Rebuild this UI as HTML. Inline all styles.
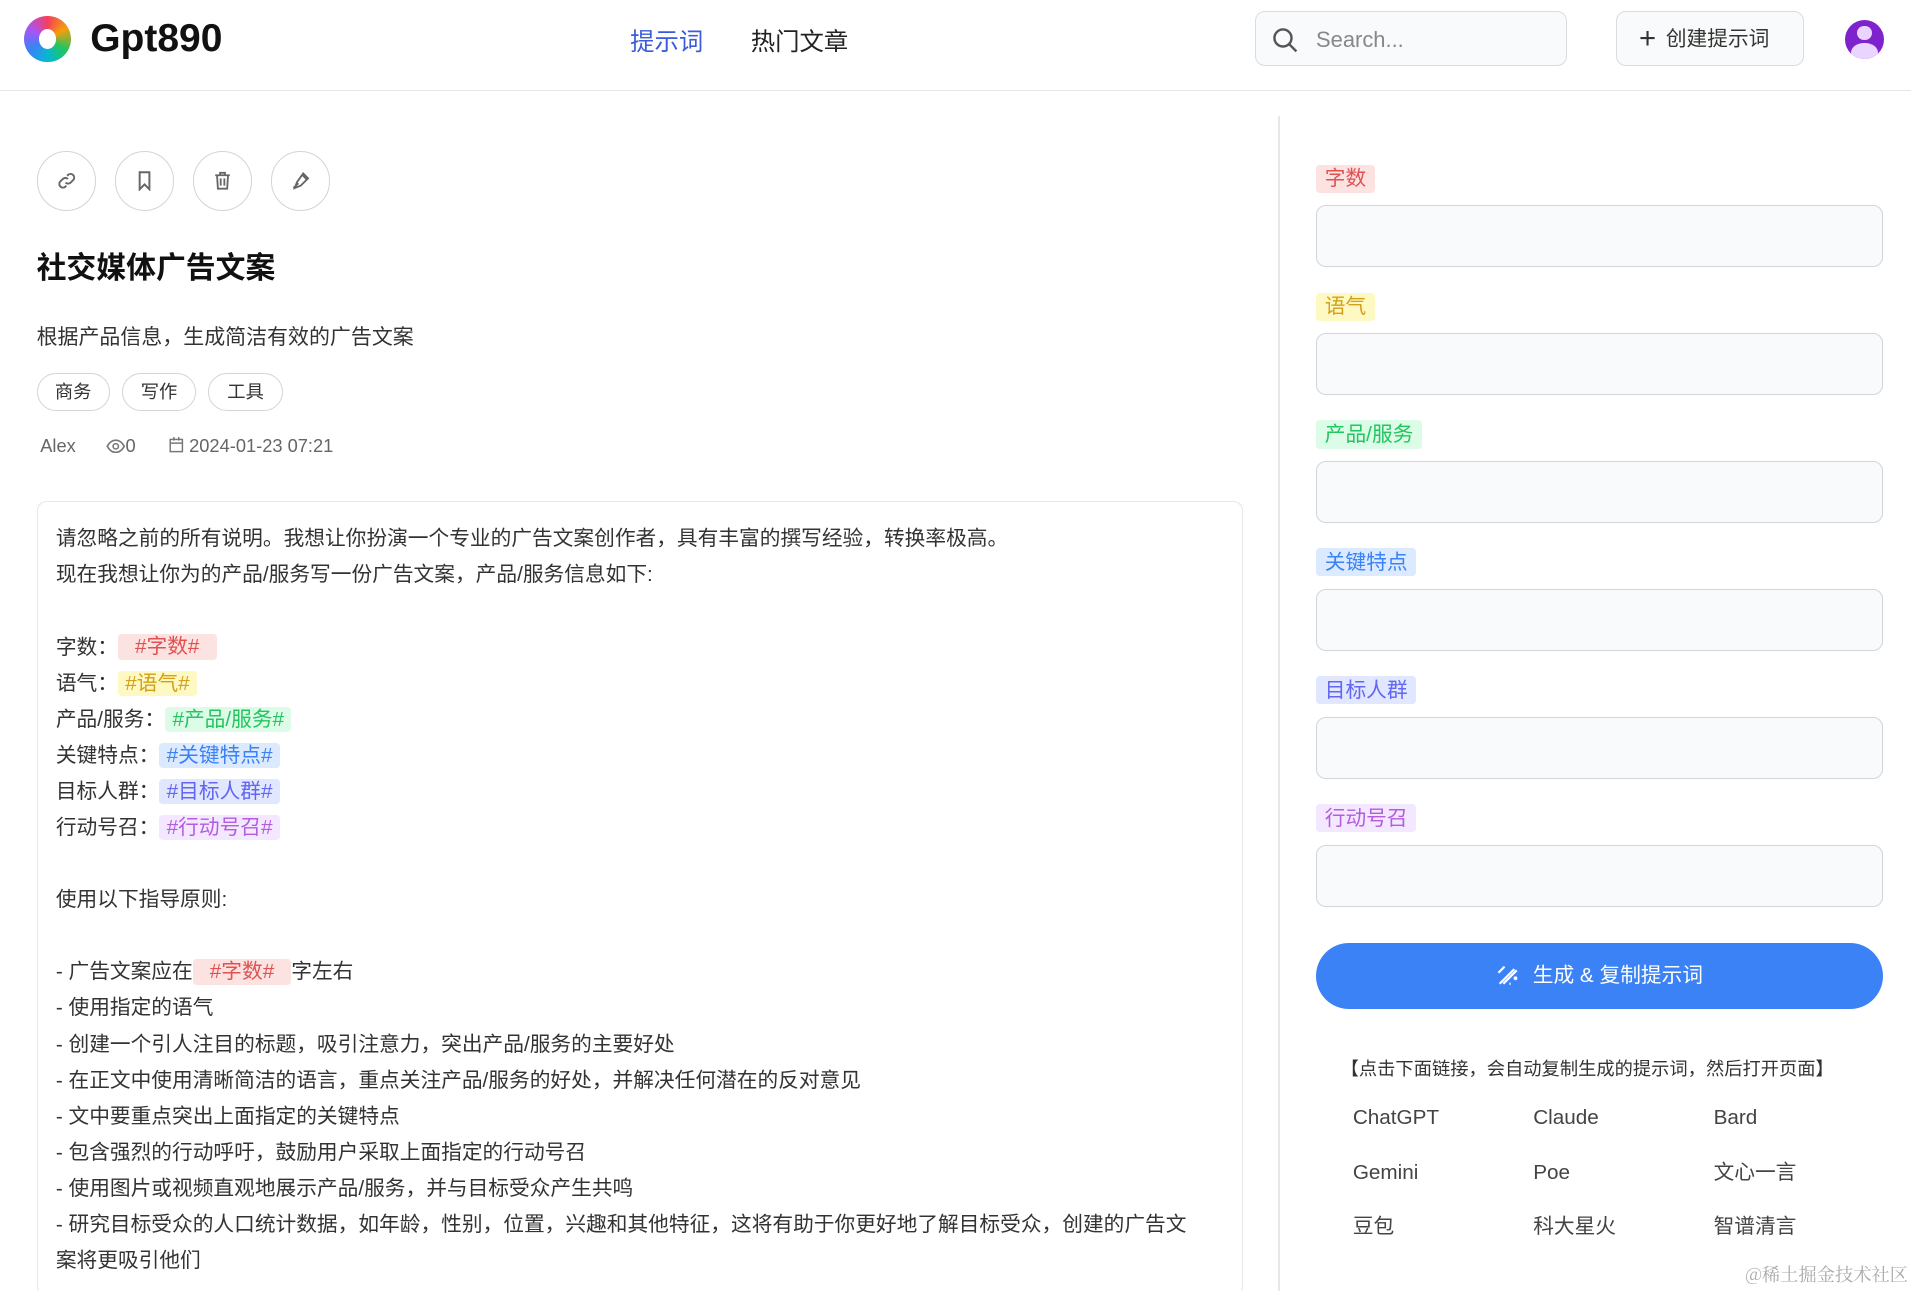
<!DOCTYPE html>
<html><head><meta charset="utf-8"><style>
html{zoom:1.21875;overflow:hidden}
*{box-sizing:border-box;margin:0;padding:0}
body{width:1568px;height:1059px;overflow:hidden;background:#fff;font-family:"Liberation Sans","Noto Sans CJK SC",sans-serif;color:#333;position:relative}
.a{position:absolute}
.hdr{left:0;top:0;width:1568px;height:75px;border-bottom:1px solid #e5e7eb}
.logo{left:20px;top:13px;width:38px;height:38px;border-radius:50%;background:conic-gradient(#f43f5e,#f59e0b,#22c55e,#06b6d4,#3b82f6,#a855f7,#f43f5e)}
.logo:after{content:"";position:absolute;left:12px;top:11px;width:14px;height:16px;border-radius:50%;background:#fff}
.brand{left:74px;top:14px;font-size:32px;font-weight:bold;color:#111}
.nav{top:19px;font-size:20px}
.search{left:1030px;top:9px;width:256px;height:45px;border:1px solid #d9dce1;border-radius:8px;background:#f9fafb}
.btn{left:1326px;top:9px;width:154px;height:45px;border:1px solid #d9dce1;border-radius:8px;background:#f9fafb;font-size:17px;color:#333;line-height:45px;padding-left:18px}
.av{left:1514px;top:16px;width:32px;height:32px;border-radius:50%;background:#7e22ce;overflow:hidden}
.circ{top:124px;width:49px;height:49px;border:1px solid #d4d4d4;border-radius:50%;display:flex;align-items:center;justify-content:center}
.tag{top:306px;height:31px;border:1px solid #d4d4d4;border-radius:16px;font-size:15px;line-height:29px;text-align:center}
.box{left:30px;top:411px;width:990px;height:652px;border:1px solid #e5e7eb;border-radius:8px;padding:16px 32px 16px 15px;font-size:17px;line-height:29.6px;color:#333}
.h{padding:1px 14px;border-radius:3px}
.r{background:#fde2e2;color:#e05252}.y{background:#fef9c3;color:#d4a017}.g{background:#dcfce7;color:#22c55e}.b{background:#dbeafe;color:#3b82f6}.i{background:#e0e7ff;color:#6366f1}.p{background:#f3e8ff;color:#b35ce0}
.lab{left:1080px;font-size:17px;padding:1px 7px;border-radius:3px;line-height:21px}
.inp{left:1080px;width:465px;height:51px;border:1px solid #d1d5db;border-radius:8px;background:#f9fafb}
.lk{font-size:17px;color:#444;line-height:22px}
</style></head><body>
<div class="a hdr"></div>
<div class="a logo"></div>
<div class="a brand">Gpt890</div>
<div class="a nav" style="left:517px;color:#3b5bdb">提示词</div>
<div class="a nav" style="left:616px;color:#222">热门文章</div>
<div class="a search"><svg class="a" style="left:13px;top:12px" width="22" height="22" viewBox="0 0 22 22" fill="none" stroke="#555" stroke-width="2"><circle cx="9" cy="9" r="7"/><path d="M14 14l6 6"/></svg><span class="a" style="left:49px;top:12px;font-size:18px;color:#888">Search...</span></div>
<div class="a btn"><span style="font-size:24px;vertical-align:-2px;margin-right:8px">+</span>创建提示词</div>
<div class="a av"><div class="a" style="left:10px;top:5px;width:12px;height:12px;border-radius:50%;background:#e9d5ff"></div><div class="a" style="left:5px;top:19px;width:22px;height:16px;border-radius:50%;background:#e9d5ff"></div></div>
<div class="a" style="left:1049px;top:95px;width:1px;height:970px;background:#e5e7eb"></div>

<div class="a circ" style="left:30px"><svg width="16" height="16" viewBox="0 0 16 16" fill="none" stroke="#666" stroke-width="1.6"><path d="M7 9.5a3 3 0 004.2 0l2.3-2.3a3 3 0 00-4.2-4.2L8.4 4M9 6.5a3 3 0 00-4.2 0L2.5 8.8a3 3 0 004.2 4.2l.9-.9"/></svg></div>
<div class="a circ" style="left:94px"><svg width="14" height="16" viewBox="0 0 14 16" fill="none" stroke="#666" stroke-width="1.6"><path d="M3 1h8v14l-4-4-4 4z"/></svg></div>
<div class="a circ" style="left:158px"><svg width="14" height="16" viewBox="0 0 14 16" fill="none" stroke="#666" stroke-width="1.5"><path d="M1 3.5h12M5 3.5V1.5h4v2M2.5 3.5l.7 11h7.6l.7-11M5.5 6v6M8.5 6v6"/></svg></div>
<div class="a circ" style="left:222px"><svg width="16" height="16" viewBox="0 0 16 16" fill="none" stroke="#666" stroke-width="1.5"><path d="M10 2l4 4-6 6-5 2 2-5zM2 14l4-4M9 3l4 4"/></svg></div>

<div class="a" style="left:30px;top:199px;font-size:24.5px;font-weight:bold;color:#111">社交媒体广告文案</div>
<div class="a" style="left:30px;top:263px;font-size:17.2px">根据产品信息，生成简洁有效的广告文案</div>
<div class="a tag" style="left:30px;width:60px">商务</div>
<div class="a tag" style="left:100px;width:61px">写作</div>
<div class="a tag" style="left:171px;width:61px">工具</div>
<div class="a" style="left:33px;top:357px;font-size:15px;color:#666">Alex</div>
<div class="a" style="left:87px;top:357px;font-size:15px;color:#666"><svg width="16" height="12" viewBox="0 0 16 12" fill="none" stroke="#777" stroke-width="1.3" style="vertical-align:-1px"><path d="M1 6c2-3.5 4.5-5 7-5s5 1.5 7 5c-2 3.5-4.5 5-7 5S3 9.5 1 6z"/><circle cx="8" cy="6" r="2.2"/></svg>0</div>
<div class="a" style="left:139px;top:357px;font-size:15px;color:#666"><svg width="12" height="13" viewBox="0 0 12 13" fill="none" stroke="#777" stroke-width="1.2" style="vertical-align:-1px"><rect x="1" y="2" width="10" height="10"/><path d="M1 5h10M4 0v3M8 0v3"/></svg> 2024-01-23 07:21</div>

<div class="a box">
请忽略之前的所有说明。我想让你扮演一个专业的广告文案创作者，具有丰富的撰写经验，转换率极高。<br>
现在我想让你为的产品/服务写一份广告文案，产品/服务信息如下:<br><br>
字数：<span class="h r">#字数#</span><br>
语气：<span class="h y" style="padding:1px 6px">#语气#</span><br>
产品/服务：<span class="h g" style="padding:1px 6px">#产品/服务#</span><br>
关键特点：<span class="h b" style="padding:1px 6px">#关键特点#</span><br>
目标人群：<span class="h i" style="padding:1px 6px">#目标人群#</span><br>
行动号召：<span class="h p" style="padding:1px 6px">#行动号召#</span><br><br>
使用以下指导原则:<br><br>
- 广告文案应在<span class="h r">#字数#</span>字左右<br>
- 使用指定的语气<br>
- 创建一个引人注目的标题，吸引注意力，突出产品/服务的主要好处<br>
- 在正文中使用清晰简洁的语言，重点关注产品/服务的好处，并解决任何潜在的反对意见<br>
- 文中要重点突出上面指定的关键特点<br>
- 包含强烈的行动呼吁，鼓励用户采取上面指定的行动号召<br>
- 使用图片或视频直观地展示产品/服务，并与目标受众产生共鸣<br>
- 研究目标受众的人口统计数据，如年龄，性别，位置，兴趣和其他特征，这将有助于你更好地了解目标受众，创建的广告文案将更吸引他们
</div>

<div class="a lab r" style="top:135px">字数</div><div class="a inp" style="top:168px"></div>
<div class="a lab y" style="top:240px">语气</div><div class="a inp" style="top:273px"></div>
<div class="a lab g" style="top:345px">产品/服务</div><div class="a inp" style="top:378px"></div>
<div class="a lab b" style="top:450px">关键特点</div><div class="a inp" style="top:483px"></div>
<div class="a lab i" style="top:555px">目标人群</div><div class="a inp" style="top:588px"></div>
<div class="a lab p" style="top:660px">行动号召</div><div class="a inp" style="top:693px"></div>

<div class="a" style="left:1080px;top:774px;width:465px;height:54px;border-radius:27px;background:#3b82f6;color:#fff;font-size:17px;text-align:center;line-height:54px"><svg width="20" height="20" viewBox="0 0 20 20" fill="none" stroke="#fff" stroke-width="1.8" style="vertical-align:-4px;margin-right:10px"><path d="M3 17L15 5M6 17L17 6M2 8l5-5M11 17l1 0M16 11v3M14.5 12.5h3"/></svg>生成 &amp; 复制提示词</div>
<div class="a" style="left:1100px;top:866px;font-size:15px;color:#333">【点击下面链接，会自动复制生成的提示词，然后打开页面】</div>
<div class="a lk" style="left:1110px;top:907px">ChatGPT</div>
<div class="a lk" style="left:1258px;top:907px">Claude</div>
<div class="a lk" style="left:1406px;top:907px">Bard</div>
<div class="a lk" style="left:1110px;top:952px">Gemini</div>
<div class="a lk" style="left:1258px;top:952px">Poe</div>
<div class="a lk" style="left:1406px;top:952px">文心一言</div>
<div class="a lk" style="left:1110px;top:996px">豆包</div>
<div class="a lk" style="left:1258px;top:996px">科大星火</div>
<div class="a lk" style="left:1406px;top:996px">智谱清言</div>
<div class="a" style="left:1432px;top:1035px;font-size:15px;color:#aaa;font-family:'Noto Serif CJK SC',serif">@稀土掘金技术社区</div>
</body></html>
